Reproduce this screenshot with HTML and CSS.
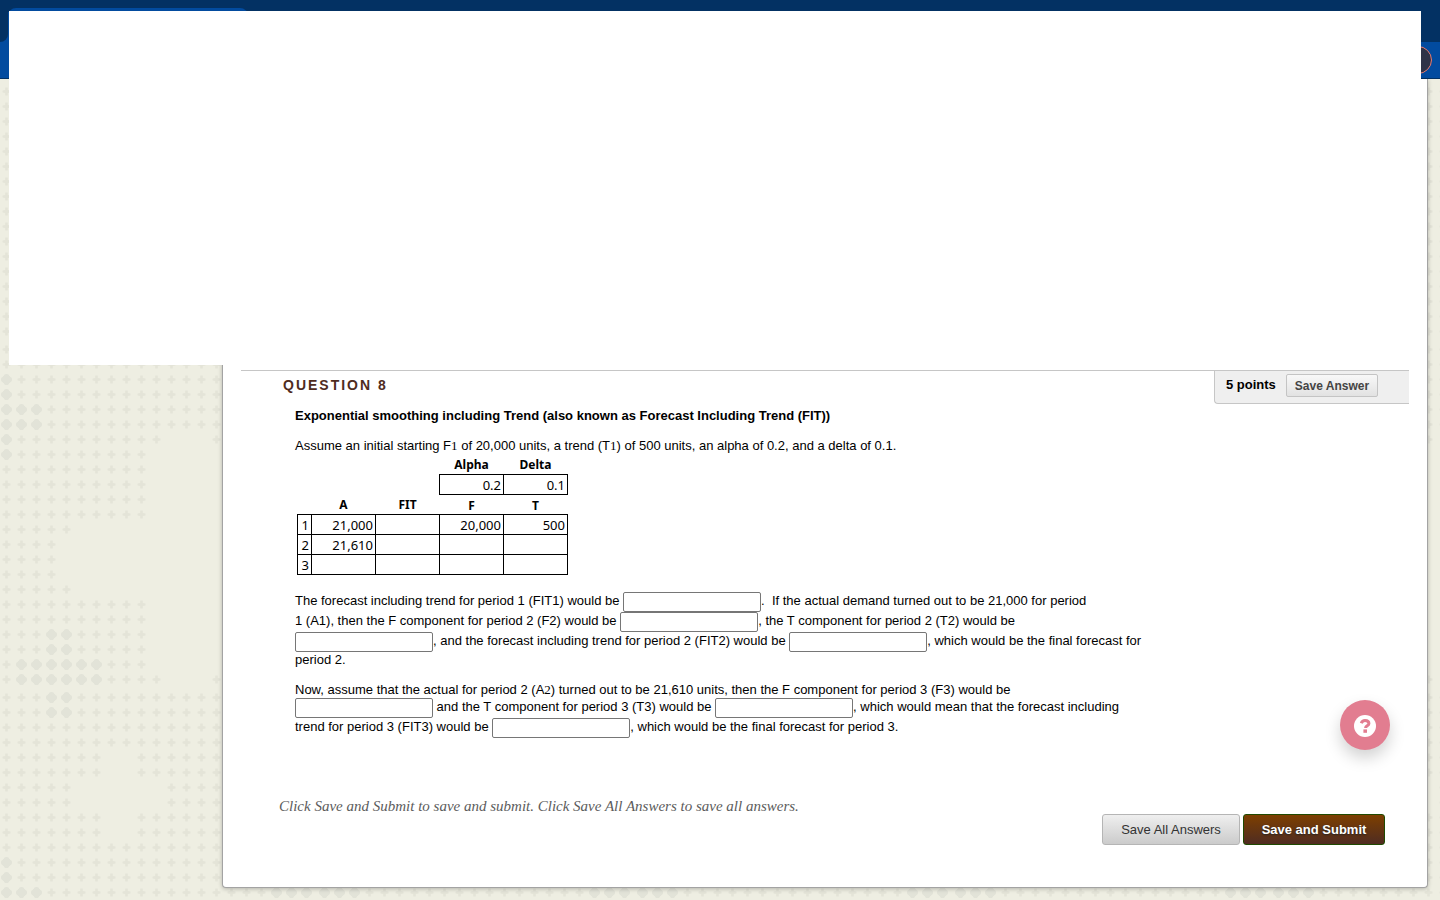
FILE: index.html
```html
<!DOCTYPE html>
<html lang="en">
<head>
<meta charset="utf-8">
<title>Question 8</title>
<link rel="stylesheet" href="styles.css">
</head>
<body>
<svg class="backdrop" aria-hidden="true">
  <defs>
    <pattern id="plus" width="15" height="15" patternUnits="userSpaceOnUse">
      <path d="M6.200 3.500h2.600v2.500l2.700 .400v2.200l-2.700 .400v2.500h-2.600v-2.500l-2.700-.400v-2.200l2.700-.400z" fill="#e4e4d8"/>
    </pattern>
    <pattern id="flower" width="15" height="15" patternUnits="userSpaceOnUse">
      <path d="M0 0h15v15h-15z" fill="#eeeee2"/>
      <g fill="#e2e3d8">
        <path d="M4 4h7v7h-7z"/>
        <circle cx="7.500" cy="4.800" r="2.800"/>
        <circle cx="7.500" cy="10.200" r="2.800"/>
        <circle cx="4.800" cy="7.500" r="2.800"/>
        <circle cx="10.200" cy="7.500" r="2.800"/>
      </g>
    </pattern>
    <pattern id="tile" width="318" height="900" patternUnits="userSpaceOnUse">
      <g transform="translate(-1 84)" fill="url(#plus)">
        <path d="M0 0h315v255h-315z"/>
      </g>
      <g transform="translate(-1 372)" fill="url(#plus)">
        <path d="M0-30h315v90h-315zM0 60h165v15h-165zM210 60h15v15h-15zM0 75h150v75h-150zM0 150h75v15h-75zM0 165h60v45h-60zM0 210h75v15h-75zM0 225h150v75h-150zM0 300h165v15h-165zM210 300h15v15h-15z"/>
        <path fill="url(#flower)" d="M0 0h15v90h-15zM15 30h30v30h-30zM45 255h30v30h-30zM15 285h90v30h-90z"/>
      </g>
      <g transform="translate(-1 690)" fill="url(#plus)">
        <path d="M0 0h315v60h-315zM0 60h105v30h-105zM135 60h180v30h-180zM0 90h75v30h-75zM165 90h150v30h-150zM0 120h105v30h-105zM135 120h180v30h-180zM0 150h315v60h-315z"/>
        <path fill="url(#flower)" d="M45 0h30v30h-30zM0 165h15v45h-15zM15 195h30v15h-30zM270 195h45v15h-45z"/>
      </g>
    </pattern>
  </defs>
  <rect width="100%" height="100%" fill="url(#tile)"/>
</svg>
<header class="browser">
  <div class="tabs"><div class="tab-edge"></div><div class="tab"></div></div>
  <div class="toolbar"><span class="avatar"></span></div>
</header>
<div class="cover"></div>
<main class="panel">
  <form class="quiz">
    <section class="question">
      <header class="question-head">
        <h1>QUESTION 8</h1>
        <div class="points"><b>5 points</b><button type="button" class="small-button">Save Answer</button></div>
      </header>
      <div class="question-body">
        <h2>Exponential smoothing including Trend (also known as Forecast Including Trend (FIT))</h2>
        <p class="intro">Assume an initial starting F<span class="serif">1</span> of 20,000 units, a trend (T<span class="serif">1</span>) of 500 units, an alpha of 0.2, and a delta of 0.1.</p>
        <table>
          <colgroup><col class="index"><col><col><col><col></colgroup>
          <tbody>
            <tr><th></th><th></th><th></th><th>Alpha</th><th>Delta</th></tr>
            <tr><th></th><th></th><th></th><td>0.2</td><td>0.1</td></tr>
            <tr><th></th><th>A</th><th>FIT</th><th>F</th><th>T</th></tr>
            <tr><td>1</td><td>21,000</td><td></td><td>20,000</td><td>500</td></tr>
            <tr><td>2</td><td>21,610</td><td></td><td></td><td></td></tr>
            <tr><td>3</td><td></td><td></td><td></td><td></td></tr>
          </tbody>
        </table>
        <p class="answers">The forecast including trend for period 1 (FIT1) would be <input type="text" aria-label="FIT1">.&nbsp; If the actual demand turned out to be 21,000 for period<br>
        1 (A1), then the F component for period 2 (F2) would be <input type="text" aria-label="F2">, the T component for period 2 (T2) would be<br>
        <input type="text" aria-label="T2">, and the forecast including trend for period 2 (FIT2) would be <input type="text" aria-label="FIT2">, which would be the final forecast for<br>
        period 2.</p>
        <p class="answers">Now, assume that the actual for period 2 (A<span class="serif">2</span>) turned out to be 21,610 units, then the F component for period 3 (F3) would be<br>
        <input type="text" aria-label="F3"> and the T component for period 3 (T3) would be <input type="text" aria-label="T3">, which would mean that the forecast including<br>
        trend for period 3 (FIT3) would be <input type="text" aria-label="FIT3">, which would be the final forecast for period 3.</p>
      </div>
    </section>
    <p class="hint">Click Save and Submit to save and submit. Click Save All Answers to save all answers.</p>
    <div class="actions">
      <button type="button" class="button">Save All Answers</button>
      <button type="submit" class="button primary">Save and Submit</button>
    </div>
  </form>
</main>
<button type="button" class="help" aria-label="Help">
  <svg width="22" height="22" viewBox="0 0 22 22" aria-hidden="true">
    <circle cx="11" cy="11" r="11" fill="#fff"/>
    <path d="M7.300 8.200C8 6.200 9.300 5.500 11 5.500c2.200 0 3.900 1.100 3.900 3 0 2.400-3.300 2.300-3.300 4.500" fill="none" stroke="#e27d90" stroke-width="3"/>
    <path d="M9.400 14.400h3.600v3.400h-3.600z" fill="#e27d90"/>
  </svg>
</button>
</body>
</html>
```
FILE: styles.css
```css
* {
  box-sizing: border-box;
}

body {
  position: relative;
  min-height: 100vh;
  margin: 0;
  padding-bottom: 12px;
  background: #eeeee2;
  color: #000;
  font: 13px/16px "Liberation Sans", Arial, sans-serif;
}

.backdrop {
  position: absolute;
  inset: 0;
  z-index: -1;
  width: 100%;
  height: 100%;
}

.tabs {
  display: flex;
  height: 42px;
  background: linear-gradient(#033163 12px, #024b9f 12px) 0 0 / 9px 100% no-repeat, #033163;
}

.tab-edge {
  width: 8px;
  background: #033163;
  border-bottom-right-radius: 8px;
}

.tab {
  width: 240px;
  margin-top: 8px;
  background: #024b9f;
  border-radius: 8px 8px 0 0;
}

.toolbar {
  display: flex;
  align-items: center;
  justify-content: flex-end;
  height: 37px;
  padding-right: 8px;
  background: #024b9f;
  border-bottom: 1px solid #033163;
}

.avatar {
  width: 28px;
  height: 28px;
  background: #2f3347;
  border: 1px solid #e77b72;
  border-radius: 50%;
}

.cover {
  position: absolute;
  top: 11px;
  right: 19px;
  left: 9px;
  height: 354px;
  background: #fff;
}

.panel {
  margin: 0 12px 0 222px;
  padding: 291px 18px 42px;
  background: #fff;
  border: 1px solid #a3a3a3;
  border-top: 0;
  border-radius: 0 0 4px 4px;
  box-shadow: 0 1px 4px rgba(0, 0, 0, 0.25);
}

.question-head {
  display: flex;
  align-items: flex-start;
  justify-content: space-between;
  border-top: 1px solid #c6c6c6;
}

h1 {
  margin: 6px 0 0 42px;
  color: #4f2c1e;
  font-size: 14px;
  line-height: 16px;
  letter-spacing: 2px;
}

.points {
  display: flex;
  gap: 10px;
  width: 195px;
  height: 33px;
  padding: 3px 0 0 11px;
  background: #efefef;
  border: 1px solid #c6c6c6;
  border-width: 0 0 1px 1px;
  border-bottom-left-radius: 4px;
  line-height: 22px;
}

.small-button {
  height: 23px;
  padding: 0 8px;
  background: linear-gradient(#f8f8f8, #e2e2e2);
  border: 1px solid #c4c4c4;
  border-radius: 2px;
  color: #444;
  font: bold 12px "Liberation Sans", Arial, sans-serif;
}

.question-body {
  padding: 4px 54px 0;
}

h2 {
  margin: 0 0 14px;
  font-size: 13px;
  line-height: 16px;
}

p {
  margin: 0;
}

.serif {
  font-family: "Liberation Serif", serif;
}

table {
  width: 271px;
  margin: 0 0 17px 2px;
  border-collapse: collapse;
  table-layout: fixed;
  font: 13px/16px "Noto Sans", sans-serif;
}

.index {
  width: 14px;
}

tr {
  height: 20px;
}

th,
td {
  padding: 2px 2px 0;
  text-align: right;
  white-space: nowrap;
}

th {
  padding-top: 3px;
  font-size: 12px;
  text-align: center;
}

td {
  border: 1px solid #000;
}

.answers {
  margin-bottom: 14px;
}

input {
  width: 138px;
  height: 20px;
  padding: 1px 2px;
  background: #fff;
  border: 1px solid #767676;
  border-radius: 2px;
  font: 13px "Liberation Sans", Arial, sans-serif;
  vertical-align: middle;
}

.hint {
  margin: 60px 0 0 38px;
  color: #5c5c5c;
  font: italic 15px/16px "Liberation Serif", Georgia, serif;
}

.actions {
  display: flex;
  justify-content: flex-end;
  gap: 3px;
  padding-right: 24px;
}

.button {
  width: 138px;
  height: 31px;
  padding: 0;
  background: linear-gradient(#efefef, #cbcbcb);
  border: 1px solid #b5b5b5;
  border-radius: 3px;
  color: #333;
  font: 13px "Liberation Sans", Arial, sans-serif;
}

.primary {
  width: 142px;
  background: linear-gradient(#7d3f00, #4f2c22);
  border-color: #1f4a00;
  color: #fff;
  font-weight: bold;
  text-shadow: 0 1px 2px #222;
}

.help {
  position: fixed;
  right: 50px;
  bottom: 150px;
  display: flex;
  align-items: center;
  justify-content: center;
  width: 50px;
  height: 50px;
  padding: 2px 0 0;
  background: #e27d90;
  border: 0;
  border-radius: 50%;
  box-shadow: 0 8px 16px rgba(0, 0, 0, 0.18);
}
```
